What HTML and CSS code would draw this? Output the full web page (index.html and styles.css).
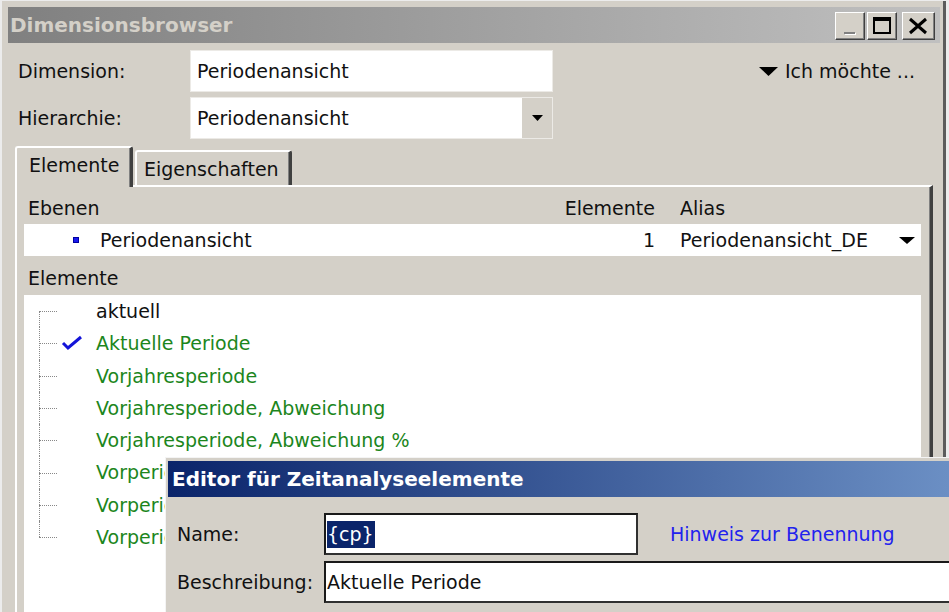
FILE: index.html
```html
<!DOCTYPE html>
<html lang="de">
<head>
    <meta charset="UTF-8">
    <meta name="viewport" content="width=device-width, initial-scale=1.0">
    <title>Dimensionsbrowser</title>
    <link rel="stylesheet" href="styles.css">
</head>
<body>

    <div class="window">
        <div class="titleBar">
            <span class="titleText">Dimensionsbrowser</span>
            <div class="captionButtons">
                <span class="capBtn">
                    <svg width="28" height="26" viewBox="0 0 28 26">
                        <rect x="9" y="20" width="11" height="2" fill="#fff"/>
                        <rect x="8" y="19" width="11" height="2" fill="#808080"/>
                    </svg>
                </span>
                <span class="capBtn">
                    <svg width="28" height="26" viewBox="0 0 28 26">
                        <rect x="6" y="5" width="16" height="15" fill="none" stroke="#000" stroke-width="2"/>
                        <rect x="6" y="5" width="16" height="3" fill="#000"/>
                    </svg>
                </span>
                <span class="capBtn closeBtn">
                    <svg width="31" height="26" viewBox="0 0 31 26">
                        <path d="M7 6 L23 20 M23 6 L7 20" stroke="#000" stroke-width="3"/>
                    </svg>
                </span>
            </div>
        </div>

        <div class="topForm">
            <div class="fields">
                <div class="fieldRow">
                    <span class="fieldLabel">Dimension:</span>
                    <div class="textBox">Periodenansicht</div>
                </div>
                <div class="fieldRow">
                    <span class="fieldLabel">Hierarchie:</span>
                    <div class="comboBox">
                        <span class="comboText">Periodenansicht</span>
                        <span class="comboBtn">
                            <svg width="11" height="6" viewBox="0 0 11 6"><polygon points="0,0 11,0 5.5,6" fill="#000"/></svg>
                        </span>
                    </div>
                </div>
            </div>
            <div class="actionMenu">
                <svg width="19" height="9" viewBox="0 0 19 9"><polygon points="0,0 19,0 9.5,9" fill="#000"/></svg>
                <span>Ich möchte ...</span>
            </div>
        </div>

        <div class="tabs">
            <div class="tab active">Elemente</div>
            <div class="tab">Eigenschaften</div>
        </div>

        <div class="tabPane">
            <div class="levelGrid levelHeader">
                <span class="colName">Ebenen</span>
                <span class="colCount">Elemente</span>
                <span class="colAlias">Alias</span>
            </div>
            <div class="levelGrid levelRow">
                <span class="colName"><span class="levelDot"></span>Periodenansicht</span>
                <span class="colCount">1</span>
                <span class="colAlias">
                    Periodenansicht_DE
                    <svg width="16" height="7" viewBox="0 0 16 7"><polygon points="0,0 16,0 8,7" fill="#000"/></svg>
                </span>
            </div>

            <div class="sectionLabel">Elemente</div>

            <div class="tree">
                <div class="treeItem first plain">aktuell</div>
                <div class="treeItem">
                    <svg class="checkMark" width="22" height="16" viewBox="0 0 22 16">
                        <polyline points="2,8 7,13 20,2" fill="none" stroke="#1414d8" stroke-width="3"/>
                    </svg>
                    Aktuelle Periode
                </div>
                <div class="treeItem">Vorjahresperiode</div>
                <div class="treeItem">Vorjahresperiode, Abweichung</div>
                <div class="treeItem">Vorjahresperiode, Abweichung %</div>
                <div class="treeItem">Vorperiode</div>
                <div class="treeItem">Vorperiode, Abweichung</div>
                <div class="treeItem last">Vorperiode, Abweichung %</div>
            </div>
        </div>
    </div>

    <!-- zweites Fenster liegt über dem Browser -->
    <div class="editor">
        <div class="editorTitle">Editor für Zeitanalyseelemente</div>
        <div class="editorBody">
            <div class="editorRow">
                <span class="editorLabel">Name:</span>
                <div class="editBox nameBox"><span class="selected">{cp}</span></div>
                <a class="hintLink">Hinweis zur Benennung</a>
            </div>
            <div class="editorRow">
                <span class="editorLabel">Beschreibung:</span>
                <div class="editBox descBox">Aktuelle Periode</div>
            </div>
        </div>
    </div>

</body>
</html>
```

FILE: styles.css
```css
body {
    margin: 0;
    font-family: "DejaVu Sans", Verdana, sans-serif;
    font-size: 19px;
    color: #111;
    background-color: #ececec;
    overflow: hidden;
    height: 612px;
    position: relative;
}

/* Hauptfenster */
.window {
    margin: 1px 3px 0 2px;
    height: 611px;
    box-sizing: border-box;
    padding: 6px 0 0 6px;
    background-color: #d4d0c8;
    border-right: 3px solid #5c5c5c;
    overflow: hidden;
}

.titleBar {
    height: 36px;
    margin-right: 3px;
    display: flex;
    align-items: center;
    justify-content: space-between;
    background: linear-gradient(to right, #808080, #c0c0c0);
}

.titleText {
    padding-left: 2px;
    font-size: 20px;
    font-weight: bold;
    color: #d4d0c8;
}

.captionButtons {
    display: flex;
    gap: 2px;
    padding-right: 5px;
    padding-top: 2px;
}

.capBtn {
    width: 30px;
    height: 28px;
    box-sizing: border-box;
    background-color: #d4d0c8;
    border: 1px solid;
    border-color: #fff #404040 #404040 #fff;
    box-shadow: inset -1px -1px 0 #808080;
    display: flex;
}

.closeBtn {
    width: 33px;
    margin-left: 3px;
}

/* Felder oben */
.topForm {
    display: flex;
    margin-top: 7px;
    padding-left: 10px;
}

.fields {
    display: flex;
    flex-direction: column;
    gap: 5px;
}

.fieldRow {
    display: flex;
    align-items: center;
}

.fieldLabel {
    width: 172px;
    flex-shrink: 0;
}

.textBox,
.comboBox {
    width: 363px;
    height: 42px;
    box-sizing: border-box;
    background-color: #fff;
    border: 1px solid #eceae6;
    display: flex;
    align-items: center;
    padding-left: 6px;
}

.comboText {
    flex-grow: 1;
}

.comboBtn {
    width: 31px;
    height: 40px;
    box-sizing: border-box;
    background-color: #d4d0c8;
    border-left: 1px solid #fff;
    display: flex;
    align-items: center;
    justify-content: center;
}

.actionMenu {
    margin-left: auto;
    margin-right: 28px;
    height: 42px;
    display: flex;
    align-items: center;
    gap: 7px;
}

/* Reiter */
.tabs {
    display: flex;
    align-items: flex-end;
    margin: 7px 0 0 7px;
    height: 39px;
    position: relative;
    z-index: 1;
}

.tab {
    height: 35px;
    box-sizing: border-box;
    padding: 6px 10px 0 7px;
    border-top: 2px solid #fff;
    border-left: 2px solid #fff;
    border-right: 3px solid #404040;
    box-shadow: inset -1px 0 0 #808080;
    border-radius: 3px 3px 0 0;
}

.tab.active {
    height: 41px;
    margin-bottom: -2px;
    padding: 6px 12px 0 12px;
    margin-right: 2px;
    background-color: #d4d0c8;
    width: 118px;
}

.tabPane {
    margin: 0 10px 0 7px;
    height: 440px;
    border-top: 2px solid #fff;
    border-left: 2px solid #fff;
    border-right: 3px solid #404040;
    box-shadow: inset -1px 0 0 #808080;
    padding: 0 9px 0 7px;
}

.levelGrid {
    display: grid;
    grid-template-columns: 511px 95px 1fr;
    column-gap: 25px;
    align-items: center;
}

.levelHeader {
    height: 32px;
    padding-top: 5px;
}

.levelHeader .colName {
    padding-left: 4px;
}

.colCount {
    text-align: right;
}

.levelRow {
    height: 32px;
    background-color: #fff;
}

.levelRow .colName {
    display: flex;
    align-items: center;
}

.levelDot {
    width: 4px;
    height: 4px;
    background-color: #1a1aee;
    border: 1px solid #0000a0;
    margin: 0 21px 0 49px;
}

.levelRow .colAlias {
    display: flex;
    align-items: center;
    justify-content: space-between;
    padding-right: 6px;
}

.sectionLabel {
    height: 34px;
    padding: 5px 0 0 4px;
    display: flex;
    align-items: center;
}

/* Baum */
.tree {
    background-color: #fff;
    height: 400px;
}

.treeItem {
    height: 32.3px;
    line-height: 32px;
    padding-left: 72px;
    position: relative;
    color: #1c861c;
    white-space: nowrap;
}

.treeItem.plain {
    color: #111;
}

.treeItem::before {
    content: '';
    position: absolute;
    left: 15px;
    top: 0;
    bottom: 0;
    border-left: 1px dotted #888;
}

.treeItem.first::before {
    top: 50%;
}

.treeItem.last::before {
    bottom: 50%;
}

.treeItem::after {
    content: '';
    position: absolute;
    left: 15px;
    width: 18px;
    top: 50%;
    border-top: 1px dotted #888;
}

.checkMark {
    position: absolute;
    left: 37px;
    top: 8px;
}

/* Editor-Dialog */
.editor {
    position: absolute;
    left: 165px;
    top: 457px;
    right: 0;
    bottom: 0;
    overflow: hidden;
    background-color: #d4d0c8;
    border-top: 1px solid #f4f4f4;
    border-left: 1px solid #f4f4f4;
    padding: 3px 0 0 2px;
}

.editorTitle {
    height: 36px;
    display: flex;
    align-items: center;
    padding-left: 4px;
    font-size: 20px;
    font-weight: bold;
    color: #fff;
    background: linear-gradient(to right, #0a246a, #6b8fc4);
}

.editorBody {
    padding: 16px 0 0 9px;
    display: flex;
    flex-direction: column;
    gap: 6px;
}

.editorRow {
    display: flex;
    align-items: center;
}

.editorLabel {
    width: 147px;
    flex-shrink: 0;
}

.editBox {
    height: 42px;
    box-sizing: border-box;
    flex-shrink: 0;
    background-color: #fff;
    border: 2px solid;
    border-color: #1a1a1a #303030 #303030 #1a1a1a;
    display: flex;
    align-items: center;
    padding-left: 1px;
}

.nameBox {
    width: 314px;
}

.descBox {
    flex-grow: 1;
    border-right: none;
}

.selected {
    background-color: #0a246a;
    color: #fff;
    line-height: 27px;
    padding-right: 1px;
}

.hintLink {
    margin-left: 32px;
    color: #2222ee;
}
```
